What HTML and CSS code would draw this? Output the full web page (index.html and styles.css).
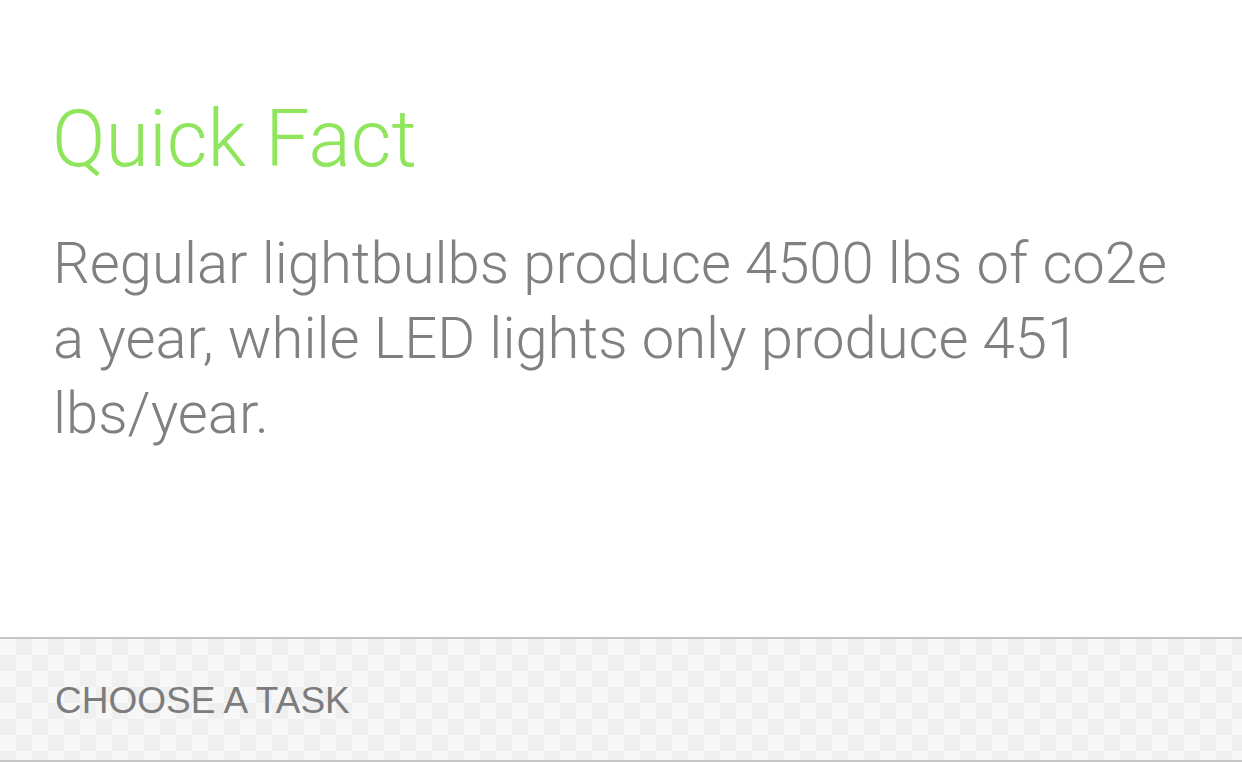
FILE: index.html
```html
<!DOCTYPE html>
<html lang="en">
<head>
<meta charset="utf-8">
<title>Quick Fact</title>
<link rel="stylesheet" href="styles.css">
</head>
<body>
<div class="screen">
  <main class="fact">
    <h1 class="fact-title">Quick Fact</h1>
    <p class="fact-text">Regular lightbulbs produce 4500 lbs of co2e a year, while LED lights only produce 451 lbs/year.</p>
  </main>
  <footer class="task-bar">
    <span class="task-label">CHOOSE A TASK</span>
  </footer>
</div>
</body>
</html>
```
FILE: styles.css
```css
html, body {
  margin: 0;
  padding: 0;
  background: #ffffff;
}
.screen {
  width: 1242px;
  height: 762px;
  display: flex;
  flex-direction: column;
  overflow: hidden;
}
.fact {
  flex: 1;
  padding: 94px 60px 0 52px;
}
.fact-title {
  margin: 0;
  font-family: Roboto, "Liberation Sans", sans-serif;
  font-weight: 300;
  font-size: 79px;
  line-height: 90px;
  color: #8fe55b;
}
.fact-text {
  margin: 42px 0 0 1px;
  font-family: Roboto, "Liberation Sans", sans-serif;
  font-weight: 300;
  font-size: 58px;
  line-height: 75px;
  color: #808080;
}
.task-bar {
  height: 121px;
  border-top: 2px solid #c6c6c6;
  border-bottom: 2px solid #c6c6c6;
  background-color: #f7f7f7;
  background-image:
    linear-gradient(45deg, #efefef 25%, transparent 25%, transparent 75%, #efefef 75%),
    linear-gradient(45deg, #efefef 25%, transparent 25%, transparent 75%, #efefef 75%);
  background-size: 32px 32px;
  background-position: 0 0, 16px 16px;
  display: flex;
  align-items: center;
  padding-left: 55px;
}
.task-label {
  font-family: "Liberation Sans", Arial, sans-serif;
  font-size: 37px;
  color: #7c7c7c;
  padding-top: 2px;
}
```
